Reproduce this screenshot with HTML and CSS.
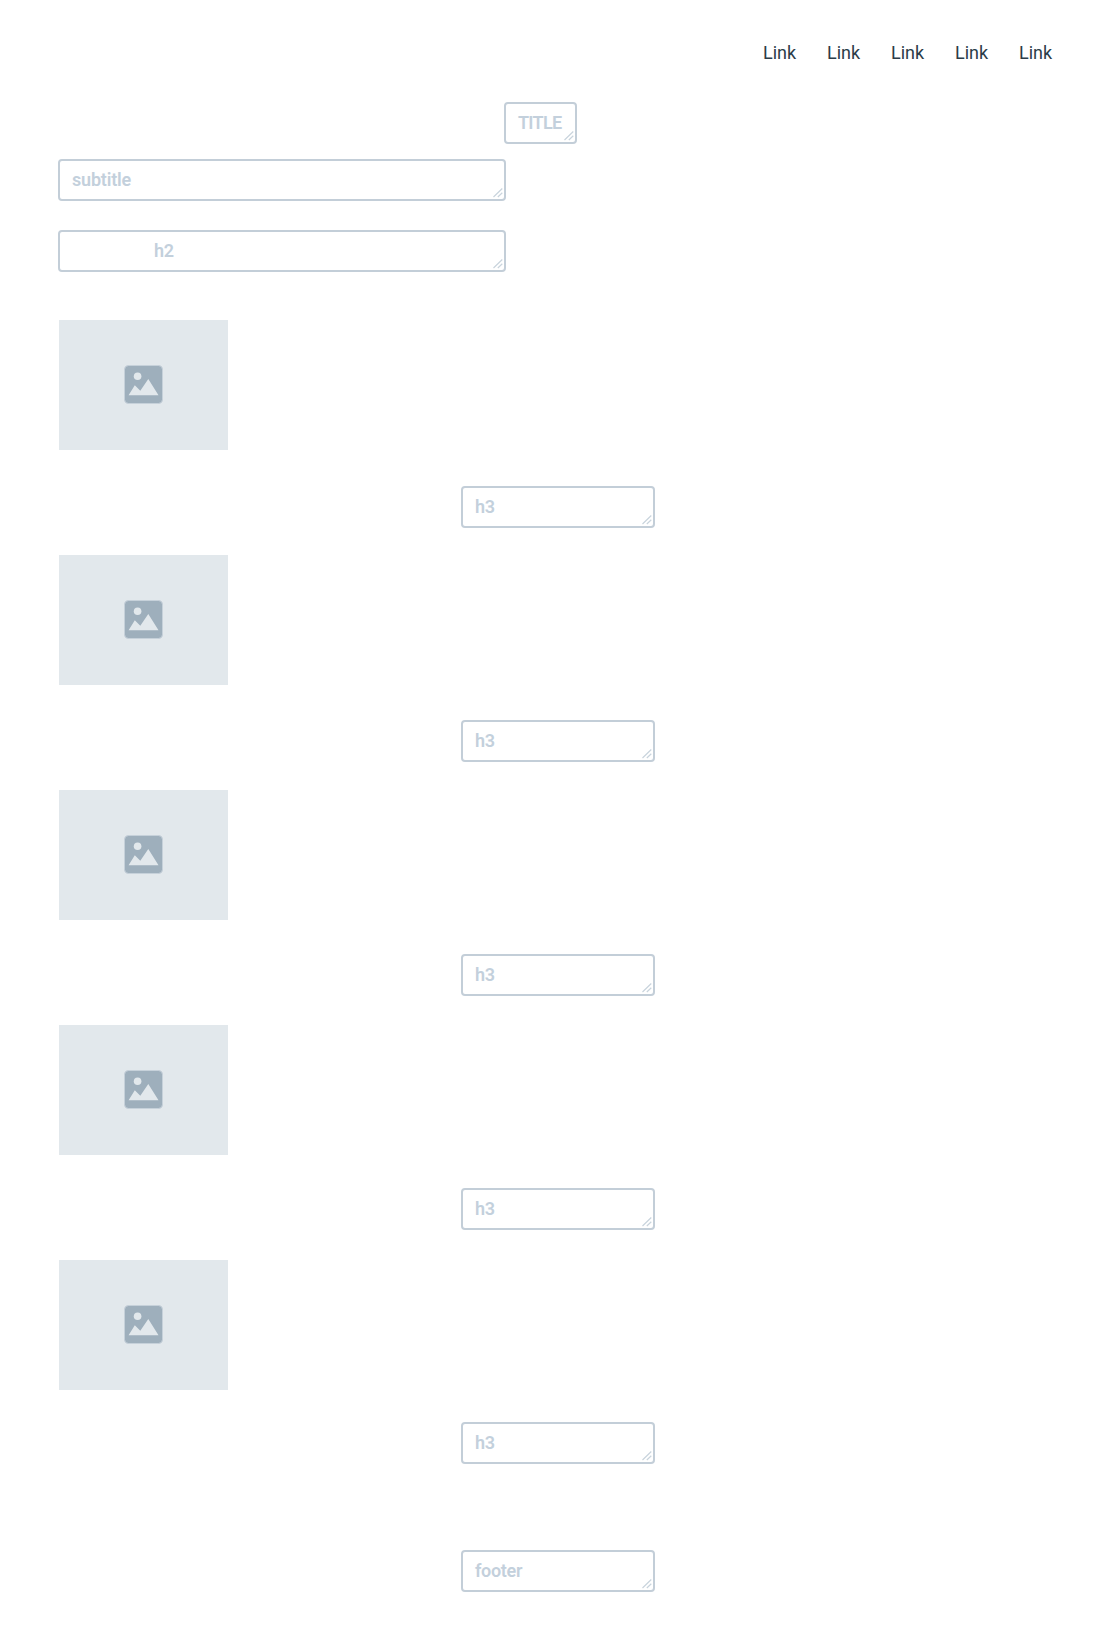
FILE: index.html
```html
<!DOCTYPE html>
<html lang="en">
<head>
<meta charset="utf-8">
<title>Wireframe</title>
<link rel="stylesheet" href="styles.css">
</head>
<body>
<svg class="defs" aria-hidden="true">
  <symbol id="picture" viewBox="0 0 39 39">
    <rect class="picture-frame" x=".5" y=".5" width="38" height="38" rx="4"/>
    <circle class="picture-cutout" cx="13.6" cy="11.3" r="3.8"/>
    <path class="picture-cutout" d="M4.6 30.2 L10.8 20.2 L16.3 25.8 L24.3 14 L34.5 30.2 Z"/>
  </symbol>
  <symbol id="grip" viewBox="0 0 10 10">
    <path class="grip-line" d="M.5 9 L9.3 .5 M4.8 9 L9.3 4.8"/>
  </symbol>
</svg>
<nav class="nav">
  <a class="link">Link</a><a class="link">Link</a><a class="link">Link</a><a class="link">Link</a><a class="link">Link</a>
</nav>
<main>
  <h1 class="field title"><span class="title-text">TITLE</span><svg class="grip"><use href="#grip"/></svg></h1>
  <p class="field subtitle"><span class="subtitle-text">subtitle</span><svg class="grip"><use href="#grip"/></svg></p>
  <h2 class="field section"><span>h2</span><svg class="grip"><use href="#grip"/></svg></h2>
  <div class="columns">
    <div class="images">
      <div class="image"><svg class="picture"><use href="#picture"/></svg></div>
      <div class="image"><svg class="picture"><use href="#picture"/></svg></div>
      <div class="image"><svg class="picture"><use href="#picture"/></svg></div>
      <div class="image"><svg class="picture"><use href="#picture"/></svg></div>
      <div class="image"><svg class="picture"><use href="#picture"/></svg></div>
    </div>
    <div class="headings">
      <h3 class="field"><span>h3</span><svg class="grip"><use href="#grip"/></svg></h3>
      <h3 class="field"><span>h3</span><svg class="grip"><use href="#grip"/></svg></h3>
      <h3 class="field"><span>h3</span><svg class="grip"><use href="#grip"/></svg></h3>
      <h3 class="field"><span>h3</span><svg class="grip"><use href="#grip"/></svg></h3>
      <h3 class="field"><span>h3</span><svg class="grip"><use href="#grip"/></svg></h3>
    </div>
  </div>
</main>
<footer class="field footer"><span class="footer-text">footer</span><svg class="grip"><use href="#grip"/></svg></footer>
</body>
</html>
```
FILE: styles.css
```css
* { box-sizing: border-box; }
body {
  margin: 0;
  min-height: 1634px;
  background: #fff;
  font-family: Roboto, "Liberation Sans", sans-serif;
  font-size: 18px;
  line-height: 22px;
}
.defs { position: absolute; width: 0; height: 0; }
.nav {
  display: flex;
  height: 102px;
  padding: 42px 0 0 763px;
}
.link { width: 64px; color: #2b3c49; }
.field {
  position: relative;
  display: flex;
  align-items: center;
  height: 42px;
  margin: 0;
  padding: 0 0 1px 12px;
  border: 2px solid #c3ced8;
  border-radius: 4px;
  color: #c3d0dc;
  font-size: 18px;
  font-weight: 600;
  letter-spacing: -.3px;
}
.grip {
  position: absolute;
  right: 1px;
  bottom: 1px;
  width: 10px;
  height: 10px;
}
.grip-line { fill: none; stroke: #c9d4dd; stroke-width: 1.2; }
.title { width: 73px; margin-left: 504px; }
.title-text { letter-spacing: -.7px; }
.subtitle { width: 448px; margin: 15px 0 0 58px; }
.subtitle-text { letter-spacing: -.2px; }
.section { width: 448px; margin: 29px 0 0 58px; padding-left: 94px; }
.columns {
  display: flex;
  gap: 233px;
  margin: 48px 0 0 59px;
}
.images { display: flex; flex-direction: column; gap: 105px; }
.image {
  display: flex;
  align-items: center;
  justify-content: center;
  width: 169px;
  height: 130px;
  padding-bottom: 2px;
  background: #e2e8ec;
}
.picture { width: 39px; height: 39px; }
.picture-frame { fill: #9eafbc; stroke: #c6d1da; stroke-width: 1; }
.picture-cutout { fill: #e2e8ec; }
.headings {
  display: flex;
  flex-direction: column;
  gap: 192px;
  width: 194px;
  padding-top: 166px;
}
.footer { width: 194px; margin: 86px 0 0 461px; }
.footer-text { letter-spacing: -.3px; }
```
